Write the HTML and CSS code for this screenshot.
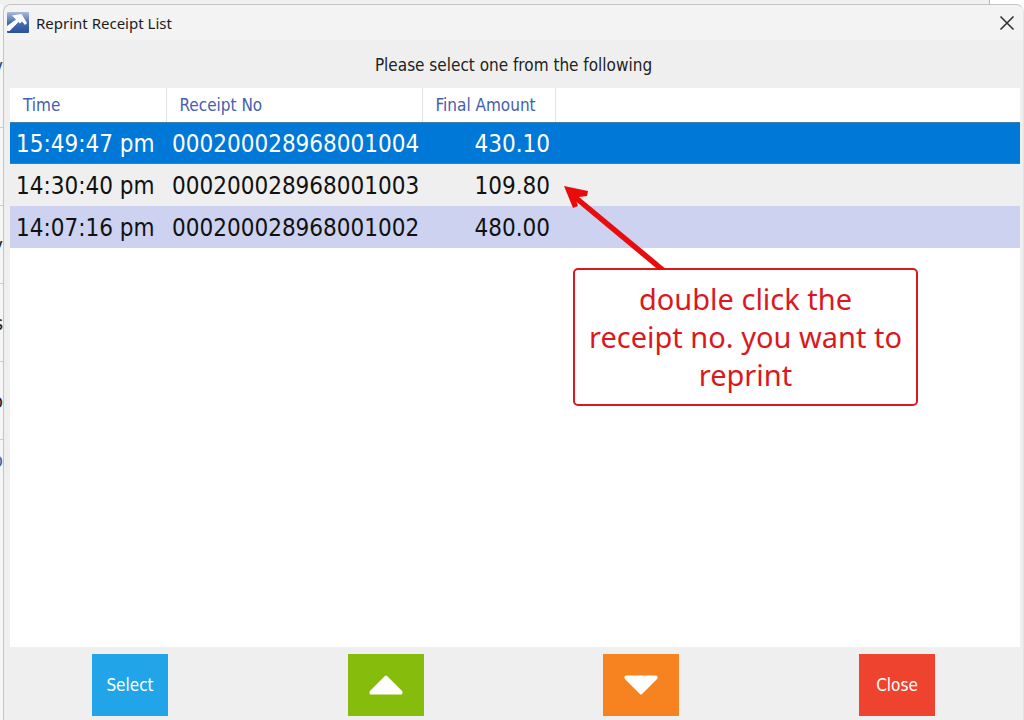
FILE: index.html
```html
<!DOCTYPE html>
<html lang="en">
<head>
  <meta charset="UTF-8" />
  <meta name="viewport" content="width=device-width, initial-scale=1.0"/>
  <title>Reprint Receipt List</title>
  <link rel="stylesheet" href="styles.css">
</head>
<body>
  <!-- Edge of the main screen behind the dialog -->
  <div class="behind" aria-hidden="true">
    <div class="behind-row first">v</div>
    <div class="behind-row"></div>
    <div class="behind-row">y</div>
    <div class="behind-row">s</div>
    <div class="behind-row">o</div>
    <div class="behind-row link">o</div>
  </div>

  <main class="window">
    <header class="title-bar">
      <svg class="app-icon" viewBox="0 0 22 21" aria-hidden="true">
        <defs>
          <linearGradient id="iconFill" x1="0" y1="0" x2="0" y2="1">
            <stop offset="0" stop-color="#a9bbda"/>
            <stop offset="0.5" stop-color="#4a6db0"/>
            <stop offset="1" stop-color="#2a4f9c"/>
          </linearGradient>
        </defs>
        <rect width="22" height="21" rx="1" fill="url(#iconFill)"/>
        <path d="M0 14 L9 7.5 L5 3.5 L14.5 2 L20 11 L18 13 L15 9.5 L13 11.5 L11.5 10 L2.5 19 L0 19 Z" fill="#fff"/>
      </svg>
      <h1>Reprint Receipt List</h1>
      <button class="window-close" type="button" aria-label="Close window">
        <svg viewBox="0 0 16 16" aria-hidden="true">
          <path d="M1.5 1.5 L14.5 14.5 M14.5 1.5 L1.5 14.5" fill="none" stroke="#333" stroke-width="1.6"/>
        </svg>
      </button>
    </header>

    <p class="message">Please select one from the following</p>

    <section class="list">
      <table>
        <thead>
          <tr>
            <th class="col-time">Time</th>
            <th class="col-receipt">Receipt No</th>
            <th class="col-amount">Final Amount</th>
            <td></td>
          </tr>
        </thead>
        <tbody>
          <tr class="selected">
            <td>15:49:47 pm</td>
            <td>000200028968001004</td>
            <td class="amount">430.10</td>
            <td></td>
          </tr>
          <tr>
            <td>14:30:40 pm</td>
            <td>000200028968001003</td>
            <td class="amount">109.80</td>
            <td></td>
          </tr>
          <tr class="alt">
            <td>14:07:16 pm</td>
            <td>000200028968001002</td>
            <td class="amount">480.00</td>
            <td></td>
          </tr>
        </tbody>
      </table>

      <div class="callout">
        <svg class="arrow" viewBox="0 0 104 84" aria-hidden="true">
          <path d="M100 85 L12 12" fill="none" stroke="#e80c0c" stroke-width="5.5"/>
          <path d="M0 0 L24 5 L23 10 L15 11 L12 14 L14 20 L9 22 Z" fill="#e80c0c"/>
        </svg>
        <p>double click the<br>receipt no. you want to<br>reprint</p>
      </div>
    </section>

    <footer class="actions">
      <button class="btn select" type="button">Select</button>
      <button class="btn up" type="button" aria-label="Up">
        <svg viewBox="0 0 34 20" aria-hidden="true">
          <path d="M17 2 L32 17 V18 H2 V17 Z" fill="#fff" stroke="#fff" stroke-width="3" stroke-linejoin="round"/>
        </svg>
      </button>
      <button class="btn down" type="button" aria-label="Down">
        <svg viewBox="0 0 34 20" aria-hidden="true">
          <path d="M17 18 L32 3 V2 H2 V3 Z" fill="#fff" stroke="#fff" stroke-width="3" stroke-linejoin="round"/>
        </svg>
      </button>
      <button class="btn close" type="button">Close</button>
    </footer>
  </main>
</body>
</html>
```

FILE: styles.css
```css
* {
  box-sizing: border-box;
}

body {
  margin: 0;
  min-height: 100vh;
  padding-top: 4px;
  display: grid;
  grid-template-columns: 3px 1fr;
  font-family: "DejaVu Sans Condensed", "Noto Sans", sans-serif;
  font-size: 17px;
  background: linear-gradient(to right, #f0f0f0 calc(100% - 35px), #b5b5b5 calc(100% - 35px), #b5b5b5 calc(100% - 34px), #fff calc(100% - 34px));
}

.behind {
  overflow: hidden;
  background: #f6f6f6;
  color: #222;
}

.behind-row {
  display: flex;
  align-items: center;
  justify-content: flex-end;
  height: 78px;
  border-bottom: 1px solid #ccc;
  font-size: 20px;
}

.behind-row.first {
  height: 124px;
  color: #2c4a7c;
}

.behind-row.link {
  align-items: flex-start;
  padding-top: 8px;
  border-bottom: none;
  color: #4460b0;
}

.window {
  display: flex;
  flex-direction: column;
  border: 1px solid #c4c4c4;
  border-right-color: #e4e4e4;
  border-bottom: none;
  border-radius: 8px 8px 0 0;
  background: #efefef;
  overflow: hidden;
}

.title-bar {
  display: flex;
  align-items: center;
  height: 35px;
  padding: 0 8px 0 3px;
  background: #f3f3f3;
}

.app-icon {
  width: 22px;
  height: 21px;
}

h1 {
  flex: 1;
  margin: 0 0 0 7px;
  font-family: "Noto Sans", sans-serif;
  font-size: 15px;
  font-weight: normal;
  color: #1c1c1c;
}

.window-close {
  display: flex;
  padding: 0;
  border: none;
  background: none;
  cursor: pointer;
}

.window-close svg {
  width: 16px;
  height: 16px;
}

.message {
  margin: 0;
  padding-top: 2px;
  line-height: 46px;
  text-align: center;
  color: #222;
}

.list {
  position: relative;
  flex: 1;
  margin: 0 3px 0 6px;
  background: #fff;
}

table {
  width: 100%;
  table-layout: fixed;
  border-collapse: collapse;
}

th,
td {
  padding: 0;
  text-align: left;
}

th {
  height: 34px;
  padding-left: 13px;
  border-right: 1px solid #e4e4e4;
  font-weight: normal;
  color: #4460b0;
}

.col-time {
  width: 156px;
}

.col-receipt {
  width: 256px;
}

.col-amount {
  width: 133px;
}

tbody tr {
  background: #efefef;
}

tbody td {
  padding: 2px 5px 0 6px;
  font-size: 24px;
  line-height: 40px;
  color: #111;
}

tbody .amount {
  text-align: right;
}

tbody .selected {
  background: #0078d7;
  box-shadow: inset 0 1px #3f7fae, inset 0 -1px #3f7fae;
}

tbody .selected td {
  color: #fff;
}

tbody .alt {
  background: #ccd2f0;
}

.callout {
  position: absolute;
  top: 180px;
  left: 563px;
  width: 345px;
  padding: 10px 8px;
  border: 2px solid #d9191e;
  border-radius: 5px;
  background: #fff;
}

.callout p {
  margin: 0;
  font-family: "Noto Sans", sans-serif;
  font-size: 29px;
  line-height: 38px;
  text-align: center;
  color: #d9191e;
}

.arrow {
  position: absolute;
  top: -84px;
  left: -11px;
  width: 104px;
  height: 84px;
}

.actions {
  display: flex;
  justify-content: space-between;
  padding: 7px 88px 4px;
}

.btn {
  display: flex;
  align-items: center;
  justify-content: center;
  width: 76px;
  height: 62px;
  padding: 0;
  border: none;
  font-family: inherit;
  font-size: 17px;
  color: #fff;
  cursor: pointer;
}

.btn svg {
  width: 34px;
  height: 20px;
}

.select {
  background: #22a5e8;
}

.up {
  background: #86bc0c;
}

.down {
  background: #f6831f;
}

.close {
  background: #ee432e;
}
```
